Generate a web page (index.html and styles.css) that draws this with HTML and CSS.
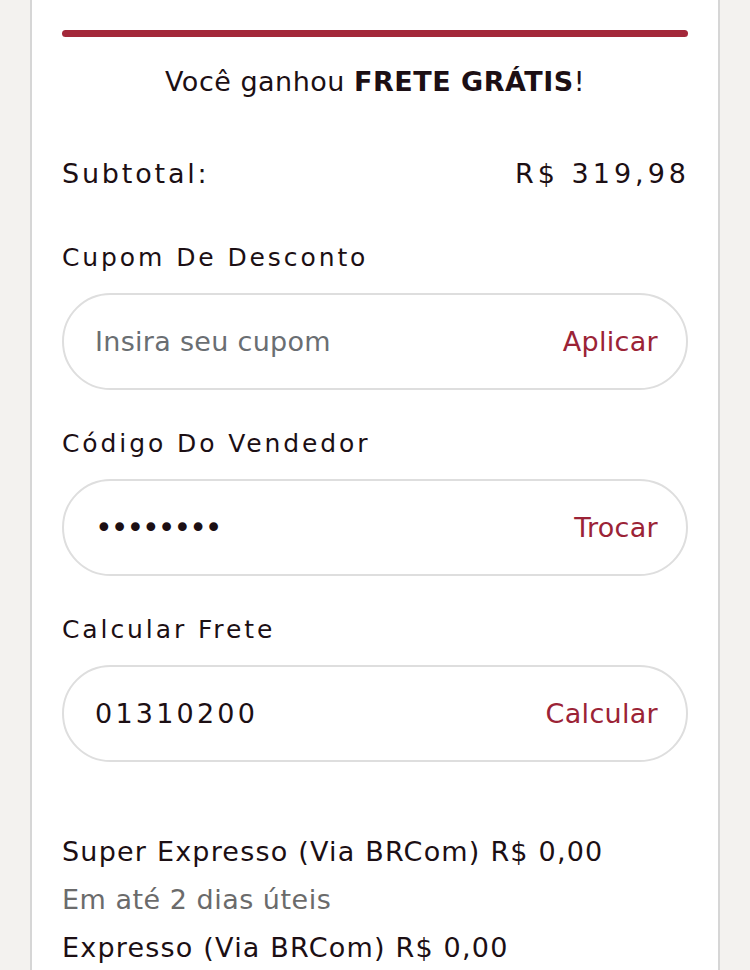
FILE: index.html
```html
<!DOCTYPE html>
<html lang="pt-BR">
<head>
<meta charset="utf-8">
<title>Carrinho</title>
<link rel="stylesheet" href="styles.css">
</head>
<body>
<div class="panel">
  <div class="progress"></div>
  <p class="headline">Você ganhou <strong>FRETE GRÁTIS</strong>!</p>
  <div class="subtotal">
    <span>Subtotal:</span>
    <span class="amount">R$ 319,98</span>
  </div>

  <div class="label">Cupom De Desconto</div>
  <div class="field">
    <span class="placeholder">Insira seu cupom</span>
    <span class="action">Aplicar</span>
  </div>

  <div class="label label-next">Código Do Vendedor</div>
  <div class="field">
    <span class="dots">••••••••</span>
    <span class="action">Trocar</span>
  </div>

  <div class="label label-next">Calcular Frete</div>
  <div class="field">
    <span class="value">01310200</span>
    <span class="action">Calcular</span>
  </div>

  <div class="shipping">
    <div class="ship-line">Super Expresso (Via BRCom) R$ 0,00</div>
    <div class="ship-line muted">Em até 2 dias úteis</div>
    <div class="ship-line">Expresso (Via BRCom) R$ 0,00</div>
  </div>
</div>
</body>
</html>
```

FILE: styles.css
```css
html, body {
  margin: 0;
  padding: 0;
  background: #f3f2ef;
  font-family: "DejaVu Sans", "Open Sans", sans-serif;
  color: #1c0f14;
}

.panel {
  margin-left: 30px;
  width: 626px;
  min-height: 970px;
  padding: 30px 30px 0;
  background: #ffffff;
  border-left: 2px solid #d6d6d6;
  border-right: 2px solid #d6d6d6;
  overflow: hidden;
}

.progress {
  height: 7px;
  border-radius: 4px;
  background: #a3283a;
}

.headline {
  margin: 25px 0 0;
  line-height: 40px;
  font-size: 27px;
  letter-spacing: 0.5px;
  text-align: center;
}

.headline strong {
  font-weight: 700;
}

.subtotal {
  margin-top: 52px;
  display: flex;
  justify-content: space-between;
  line-height: 40px;
  font-size: 27px;
  letter-spacing: 2.8px;
}

.amount {
  letter-spacing: 4px;
  margin-right: -2px;
}

.label {
  margin-top: 46px;
  line-height: 36px;
  font-size: 25px;
  letter-spacing: 2.9px;
}

.label-next {
  margin-top: 36px;
}

.field {
  margin-top: 17px;
  height: 93px;
  box-sizing: content-box;
  border: 2px solid #dedede;
  border-radius: 50px;
  display: flex;
  align-items: center;
  justify-content: space-between;
  padding: 0 28px 0 31px;
  font-size: 27px;
  letter-spacing: 0.3px;
}

.placeholder {
  color: #6a6e72;
}

.value {
  color: #1c0f14;
  letter-spacing: 3.2px;
}

.dots {
  color: #1c0f14;
  font-size: 30px;
  letter-spacing: -2px;
}

.action {
  color: #9b2336;
}

.shipping {
  margin-top: 66px;
}

.ship-line {
  line-height: 48px;
  font-size: 27px;
  letter-spacing: 1.2px;
}

.muted {
  color: #6b6b6b;
  letter-spacing: 0.5px;
}
```
